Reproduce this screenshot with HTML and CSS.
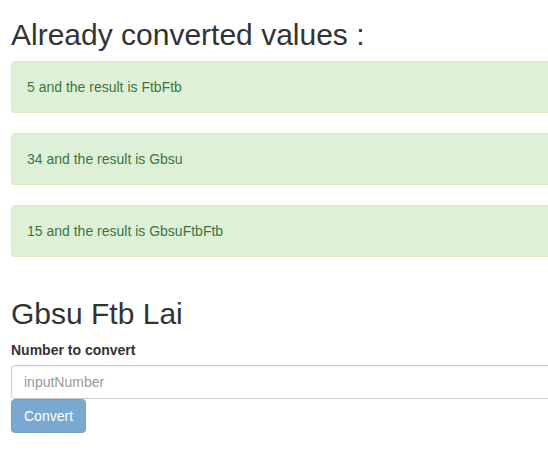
FILE: index.html
```html
<!DOCTYPE html>
<html>
<head>
<meta charset="utf-8">
<link rel="stylesheet" href="styles.css">
</head>
<body>
<div class="page">
  <section class="converted">
    <h2 class="title">Already converted values :</h2>
    <div class="alert">5 and the result is FtbFtb</div>
    <div class="alert">34 and the result is Gbsu</div>
    <div class="alert">15 and the result is GbsuFtbFtb</div>
  </section>
  <section class="converter">
    <h2 class="title">Gbsu Ftb Lai</h2>
    <form class="form">
      <label class="label" for="inputNumber">Number to convert</label>
      <input class="input" id="inputNumber" type="text" placeholder="inputNumber">
      <button class="btn" type="button" disabled>Convert</button>
    </form>
  </section>
</div>
</body>
</html>
```
FILE: styles.css
```css
html, body {
  margin: 0;
  padding: 0;
  background: #fff;
  overflow: hidden;
}
body {
  font-family: "Liberation Sans", Arial, Helvetica, sans-serif;
  font-size: 14px;
  line-height: 1.42857143;
  color: #333;
}
.page {
  width: 580px;
  padding: 0 0 0 11px;
}
.title {
  font-size: 30px;
  font-weight: 500;
  line-height: 1.1;
  margin: 20px 0 10px;
}
.converted .title {
  margin-top: 18px;
}
.converter {
  padding-top: 1px;
}
.converter .title {
  margin-top: 19px;
}
.alert {
  padding: 15px;
  margin-bottom: 20px;
  border: 1px solid #d6e9c6;
  border-radius: 4px;
  background: #dff0d8;
  color: #3c763d;
}
.form {
  display: flex;
  flex-direction: column;
  align-items: flex-start;
}
.label {
  display: block;
  font-weight: bold;
  margin-bottom: 5px;
}
.input {
  box-sizing: border-box;
  width: 100%;
  height: 34px;
  padding: 6px 12px;
  font-family: inherit;
  font-size: 14px;
  line-height: 1.42857143;
  color: #555;
  background: #fff;
  border: 1px solid #ccc;
  border-radius: 4px;
  box-shadow: inset 0 1px 1px rgba(0,0,0,.075);
  margin: 0;
}
.input::placeholder {
  color: #999;
}
.btn {
  margin: 0;
  padding: 6px 12px;
  font-family: inherit;
  font-size: 14px;
  line-height: 1.42857143;
  color: #fff;
  background: #337ab7;
  border: 1px solid #2e6da4;
  border-radius: 4px;
  opacity: .65;
}
```
